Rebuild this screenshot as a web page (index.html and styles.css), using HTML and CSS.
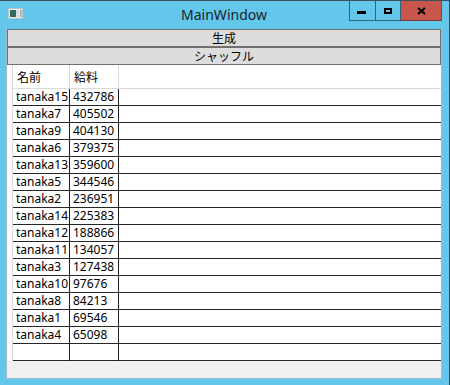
FILE: index.html
```html
<!DOCTYPE html>
<html lang="ja">
<head>
    <meta charset="UTF-8">
    <title>MainWindow</title>
    <link rel="stylesheet" href="styles.css">
</head>
<body>
    <div class="window">
        <div class="titlebar">
            <div class="tb-left">
                <svg class="app-icon" width="15" height="11" viewBox="0 0 15 11">
                    <rect x="0.5" y="0.5" width="14" height="10" fill="#e9edef" stroke="#b9c3c8"/>
                    <rect x="2" y="2" width="6" height="7" fill="#2f6b60"/>
                    <rect x="8" y="2" width="3" height="7" fill="#d7dde0"/>
                    <rect x="12" y="2" width="1.5" height="7" fill="#9aa6ab"/>
                </svg>
            </div>
            <div class="title">MainWindow</div>
            <div class="caption">
                <div class="cap-btn min">
                    <svg width="25" height="19" viewBox="0 0 25 19"><rect x="7" y="10" width="9" height="3" fill="#000"/></svg>
                </div>
                <div class="cap-btn max">
                    <svg width="24" height="19" viewBox="0 0 24 19"><path d="M8 7h8v6h-8z M10 9v2h4v-2z" fill="#000" fill-rule="evenodd"/></svg>
                </div>
                <div class="cap-btn close">
                    <svg width="40" height="19" viewBox="0 0 40 19"><path d="M17 7l7 6M24 7l-7 6" stroke="#000" stroke-width="2"/></svg>
                </div>
            </div>
        </div>

        <div class="client">
            <div class="btn">生成</div>
            <div class="btn">シャッフル</div>
            <div class="grid">
                <div class="row head">
                    <div class="rh"></div>
                    <div class="cell c1">名前</div>
                    <div class="cell c2">給料</div>
                    <div class="cell fill"></div>
                </div>
                <div class="row"><div class="rh"></div><div class="cell c1">tanaka15</div><div class="cell c2">432786</div><div class="cell fill"></div></div>
                <div class="row"><div class="rh"></div><div class="cell c1">tanaka7</div><div class="cell c2">405502</div><div class="cell fill"></div></div>
                <div class="row"><div class="rh"></div><div class="cell c1">tanaka9</div><div class="cell c2">404130</div><div class="cell fill"></div></div>
                <div class="row"><div class="rh"></div><div class="cell c1">tanaka6</div><div class="cell c2">379375</div><div class="cell fill"></div></div>
                <div class="row"><div class="rh"></div><div class="cell c1">tanaka13</div><div class="cell c2">359600</div><div class="cell fill"></div></div>
                <div class="row"><div class="rh"></div><div class="cell c1">tanaka5</div><div class="cell c2">344546</div><div class="cell fill"></div></div>
                <div class="row"><div class="rh"></div><div class="cell c1">tanaka2</div><div class="cell c2">236951</div><div class="cell fill"></div></div>
                <div class="row"><div class="rh"></div><div class="cell c1">tanaka14</div><div class="cell c2">225383</div><div class="cell fill"></div></div>
                <div class="row"><div class="rh"></div><div class="cell c1">tanaka12</div><div class="cell c2">188866</div><div class="cell fill"></div></div>
                <div class="row"><div class="rh"></div><div class="cell c1">tanaka11</div><div class="cell c2">134057</div><div class="cell fill"></div></div>
                <div class="row"><div class="rh"></div><div class="cell c1">tanaka3</div><div class="cell c2">127438</div><div class="cell fill"></div></div>
                <div class="row"><div class="rh"></div><div class="cell c1">tanaka10</div><div class="cell c2">97676</div><div class="cell fill"></div></div>
                <div class="row"><div class="rh"></div><div class="cell c1">tanaka8</div><div class="cell c2">84213</div><div class="cell fill"></div></div>
                <div class="row"><div class="rh"></div><div class="cell c1">tanaka1</div><div class="cell c2">69546</div><div class="cell fill"></div></div>
                <div class="row"><div class="rh"></div><div class="cell c1">tanaka4</div><div class="cell c2">65098</div><div class="cell fill"></div></div>
                <div class="row"><div class="rh"></div><div class="cell c1"></div><div class="cell c2"></div><div class="cell fill"></div></div>
            </div>
        </div>
    </div>
</body>
</html>
```

FILE: styles.css
```css
body { margin: 0; font-family: 'Noto Sans', 'Noto Sans CJK JP', sans-serif; }
.window { width: 450px; height: 385px; box-sizing: border-box; background-color: #62c7ea; border-top: 1px solid #3e5058; border-right: 1px solid #38474e; padding: 0 7px 0 6px; }

.titlebar { height: 28px; display: grid; grid-template-columns: 1fr auto 1fr; align-items: start; }
.tb-left { padding: 7px 0 0 2px; }
.app-icon { display: block; }
.title { font-size: 14px; line-height: 28px; color: #1c2429; }
.caption { justify-self: end; display: flex; }
.cap-btn { height: 20px; box-sizing: border-box; border-left: 1px solid #2f6678; border-bottom: 1px solid #2f6678; }
.cap-btn svg { display: block; }
.close { background-color: #c7564d; border-right: 1px solid #2f6678; border-bottom-color: #7a3a34; }

.client { height: 350px; box-sizing: border-box; background-color: #f0f0f0; border: 1px solid #a7bac7; border-top: none; }
.btn { height: 18px; box-sizing: border-box; border: 1px solid #707070; background-color: #dddddd; text-align: center; font-family: 'Noto Sans CJK JP', sans-serif; font-size: 12px; line-height: 16px; color: #000; }

.grid { background-color: #fff; }
.row { display: flex; height: 17px; font-size: 12px; line-height: 16px; color: #000; }
.rh { width: 6px; box-sizing: border-box; border-right: 1px solid #d9d9d9; }
.cell { box-sizing: border-box; border-bottom: 1px solid #262626; padding-left: 3px; white-space: nowrap; }
.c1 { width: 57px; border-right: 1px solid #1e1e1e; }
.c2 { width: 49px; border-right: 1px solid #1e1e1e; }
.fill { flex: 1; }
.row.head { height: 24px; }
.head .cell { border-bottom-color: #dadada; border-right-color: #d8d8d8; padding: 1px 0 0 4px; line-height: 22px; font-family: 'Noto Sans CJK JP', sans-serif; }
```
